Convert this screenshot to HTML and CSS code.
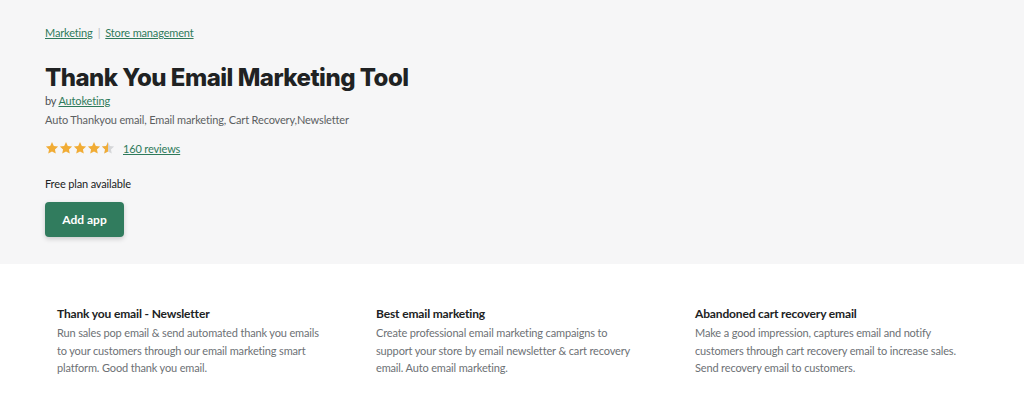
FILE: index.html
```html
<!DOCTYPE html>
<html lang="en">
<head>
    <meta charset="UTF-8">
    <title>Thank You Email Marketing Tool</title>
    <link rel="stylesheet" href="styles.css">
</head>
<body>
    <div class="hero">
        <div class="crumbs">
            <a href="#">Marketing</a>
            <span class="sep">|</span>
            <a href="#">Store management</a>
        </div>
        <h1 class="title">Thank You Email Marketing Tool</h1>
        <p class="by">by <a href="#">Autoketing</a></p>
        <p class="tagline">Auto Thankyou email, Email marketing, Cart Recovery,Newsletter</p>
        <div class="rating">
            <span class="stars">
                <svg viewBox="0 0 20 20"><path class="on" d="M10 1.5l2.6 5.6 6.1.7-4.5 4.2 1.2 6-5.4-3-5.4 3 1.2-6-4.5-4.2 6.1-.7z"/></svg>
                <svg viewBox="0 0 20 20"><path class="on" d="M10 1.5l2.6 5.6 6.1.7-4.5 4.2 1.2 6-5.4-3-5.4 3 1.2-6-4.5-4.2 6.1-.7z"/></svg>
                <svg viewBox="0 0 20 20"><path class="on" d="M10 1.5l2.6 5.6 6.1.7-4.5 4.2 1.2 6-5.4-3-5.4 3 1.2-6-4.5-4.2 6.1-.7z"/></svg>
                <svg viewBox="0 0 20 20"><path class="on" d="M10 1.5l2.6 5.6 6.1.7-4.5 4.2 1.2 6-5.4-3-5.4 3 1.2-6-4.5-4.2 6.1-.7z"/></svg>
                <svg viewBox="0 0 20 20">
                    <defs><clipPath id="half"><rect x="0" y="0" width="10" height="20"/></clipPath></defs>
                    <path class="off" d="M10 1.5l2.6 5.6 6.1.7-4.5 4.2 1.2 6-5.4-3-5.4 3 1.2-6-4.5-4.2 6.1-.7z"/>
                    <path class="on" clip-path="url(#half)" d="M10 1.5l2.6 5.6 6.1.7-4.5 4.2 1.2 6-5.4-3-5.4 3 1.2-6-4.5-4.2 6.1-.7z"/>
                </svg>
            </span>
            <a href="#">160 reviews</a>
        </div>
        <p class="plan">Free plan available</p>
        <button class="add">Add app</button>
    </div>
    <div class="features">
        <div class="feature">
            <h3>Thank you email - Newsletter</h3>
            <p>Run sales pop email &amp; send automated thank you emails to your customers through our email marketing smart platform. Good thank you email.</p>
        </div>
        <div class="feature">
            <h3>Best email marketing</h3>
            <p>Create professional email marketing campaigns to support your store by email newsletter &amp; cart recovery email. Auto email marketing.</p>
        </div>
        <div class="feature">
            <h3>Abandoned cart recovery email</h3>
            <p>Make a good impression, captures email and notify customers through cart recovery email to increase sales. Send recovery email to customers.</p>
        </div>
    </div>
</body>
</html>
```

FILE: styles.css
```css
* {
    margin: 0;
    padding: 0;
    box-sizing: border-box;
}
body {
    font-family: Lato, "Liberation Sans", sans-serif;
    font-size: 11px;
    letter-spacing: -0.15px;
    color: #212326;
    background: #ffffff;
}
a {
    color: #2f7a5b;
    text-decoration: underline;
}
.hero {
    background: #f6f6f7;
    height: 264px;
    padding: 25px 45px 0;
}
.crumbs {
    line-height: 16px;
    display: flex;
    gap: 5px;
}
.sep {
    color: #b5b8bb;
}
.title {
    font-family: Inter, "Liberation Sans", sans-serif;
    font-size: 24px;
    font-weight: 800;
    letter-spacing: -0.5px;
    line-height: 30px;
    margin-top: 22px;
    color: #202223;
}
.by {
    line-height: 16px;
    color: #4c4f52;
}
.tagline {
    line-height: 16px;
    margin-top: 3px;
    color: #5c5f62;
}
.rating {
    display: flex;
    align-items: center;
    gap: 8px;
    margin-top: 13px;
}
.stars {
    display: flex;
}
.stars svg {
    width: 14px;
    height: 14px;
}
.on {
    fill: #f1ac35;
}
.off {
    fill: #d5d6d8;
}
.plan {
    line-height: 16px;
    margin-top: 21px;
    color: #202223;
}
.add {
    display: block;
    margin-top: 10px;
    width: 79px;
    height: 35px;
    border: none;
    border-radius: 4px;
    background: #317c5e;
    color: #ffffff;
    font-family: inherit;
    font-size: 12px;
    font-weight: 700;
    box-shadow: 0 2px 5px rgba(0, 0, 0, 0.18);
}
.features {
    display: grid;
    grid-template-columns: repeat(3, 319px);
    padding: 41px 0 0 57px;
}
.feature {
    padding-right: 53px;
}
.feature h3 {
    font-size: 12px;
    font-weight: 700;
    line-height: 18px;
    color: #202223;
}
.feature p {
    line-height: 17.5px;
    color: #6d7175;
    margin-top: 1px;
}
```
